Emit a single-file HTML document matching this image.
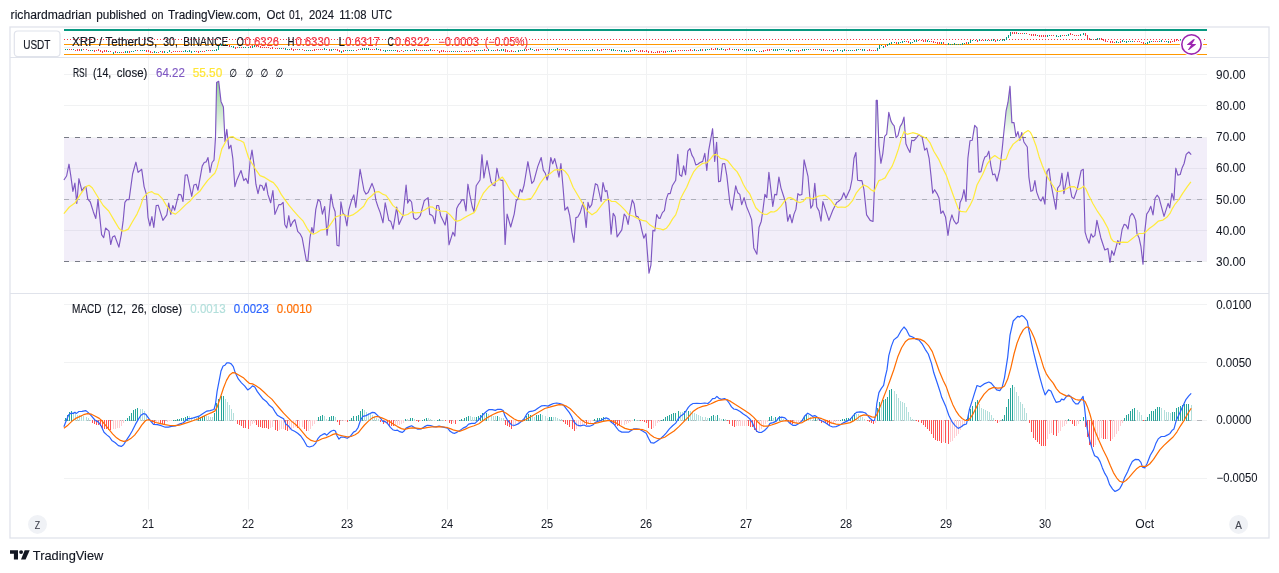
<!DOCTYPE html>
<html lang="en"><head><meta charset="utf-8"><title>XRP / TetherUS RSI and MACD chart</title>
<style>html,body{margin:0;padding:0;background:#fff}body{width:1279px;height:573px;overflow:hidden;font-family:'Liberation Sans', Arial, sans-serif}svg{display:block;will-change:transform}</style>
</head><body>
<svg width="1279" height="573" viewBox="0 0 1279 573" font-family="'Liberation Sans', Arial, sans-serif" font-size="12">
<rect width="1279" height="573" fill="#fff"/>
<text y="18.8" fill="#131722" stroke="#131722" stroke-width="0.15"><tspan x="10.6" textLength="80.9" lengthAdjust="spacingAndGlyphs">richardmadrian</tspan> <tspan x="96.2" textLength="50.0" lengthAdjust="spacingAndGlyphs">published</tspan> <tspan x="151.4" textLength="12.0" lengthAdjust="spacingAndGlyphs">on</tspan> <tspan x="168.1" textLength="92.9" lengthAdjust="spacingAndGlyphs">TradingView.com,</tspan> <tspan x="266.5" textLength="17.9" lengthAdjust="spacingAndGlyphs">Oct</tspan> <tspan x="289.1" textLength="14.1" lengthAdjust="spacingAndGlyphs">01,</tspan> <tspan x="309" textLength="25.0" lengthAdjust="spacingAndGlyphs">2024</tspan> <tspan x="339.2" textLength="27.3" lengthAdjust="spacingAndGlyphs">11:08</tspan> <tspan x="371.2" textLength="20.8" lengthAdjust="spacingAndGlyphs">UTC</tspan></text>
<g stroke="#f1f2f3" stroke-width="1" fill="none">
<path d="M148.5 28V509.5M248.5 28V509.5M347.5 28V509.5M447.5 28V509.5M547.5 28V509.5M646.5 28V509.5M746.5 28V509.5M846.5 28V509.5M946.5 28V509.5M1045.5 28V509.5M1145.5 28V509.5"/>
<path d="M64 74.5H1207M64 105.5H1207M64 137.5H1207M64 168.5H1207M64 199.5H1207M64 230.5H1207M64 261.5H1207"/>
<path d="M64 304.5H1207M64 362.5H1207M64 420.5H1207M64 478.5H1207"/>
<path d="M64 47.5H1207"/>
</g>
<rect x="64" y="138" width="1143" height="123" fill="#7e57c2" fill-opacity="0.1"/>
<g stroke="#787b86" stroke-width="1" fill="none" stroke-dasharray="5 6">
<path d="M64 137.5H1207M64 261.5H1207"/>
<path d="M64 199.5H1207M64 420.5H1207" stroke-opacity="0.5"/>
</g>
<defs>
<linearGradient id="gOB" gradientUnits="userSpaceOnUse" x1="0" y1="43.7" x2="0" y2="137.5"><stop offset="0" stop-color="#4caf50" stop-opacity="1"/><stop offset="1" stop-color="#4caf50" stop-opacity="0"/></linearGradient>
<linearGradient id="gOS" gradientUnits="userSpaceOnUse" x1="0" y1="261.5" x2="0" y2="354.7"><stop offset="0" stop-color="#f23645" stop-opacity="0"/><stop offset="1" stop-color="#f23645" stop-opacity="1"/></linearGradient>
<clipPath id="cOB"><rect x="64" y="58" width="1143" height="79.5"/></clipPath>
<clipPath id="cOS"><rect x="64" y="261.5" width="1143" height="31.5"/></clipPath>
</defs>
<polygon clip-path="url(#cOB)" fill="url(#gOB)" points="63.9,137.5 63.9,180.0 66.6,176.0 69.0,164.2 70.7,175.2 72.9,191.3 74.9,183.1 76.8,203.4 78.9,178.7 82.0,191.0 83.9,187.8 85.9,186.6 87.8,199.1 90.3,202.0 93.3,211.7 95.8,218.5 98.0,199.6 101.6,234.6 103.7,237.7 105.6,228.0 109.0,231.1 110.7,244.5 112.6,236.9 114.7,235.8 118.9,247.1 121.3,234.6 123.2,220.4 124.9,202.3 126.8,199.6 129.1,199.6 132.6,174.0 135.9,162.2 138.1,172.4 141.7,169.3 144.1,186.6 146.4,194.4 148.0,217.3 149.9,225.9 151.9,216.5 153.8,227.5 156.2,205.5 158.2,205.2 162.9,220.4 166.8,214.9 168.7,203.1 170.8,214.5 172.8,205.5 174.7,210.2 178.6,194.4 181.0,194.7 183.0,201.5 185.2,175.1 187.3,174.8 191.7,196.3 193.9,185.0 196.1,184.2 197.9,190.2 202.2,166.1 204.2,162.5 206.1,161.9 208.0,157.5 210.0,172.4 212.1,162.5 214.0,160.2 215.5,137.6 216.6,82.6 218.7,81.3 221.0,101.4 223.4,106.9 225.0,141.5 226.8,129.4 228.9,148.6 230.9,145.2 232.8,158.3 234.9,186.6 236.7,180.6 241.0,170.5 243.8,180.6 245.9,178.4 248.1,183.4 250.1,161.4 252.0,150.1 254.0,164.6 255.9,184.2 258.0,193.6 260.0,185.0 262.0,185.8 263.9,190.5 266.0,182.9 267.9,194.4 270.7,202.7 272.9,190.5 274.9,214.4 278.9,204.6 280.9,204.6 283.1,202.3 284.8,224.4 286.7,228.0 288.8,215.7 290.6,226.4 292.7,222.0 294.9,219.6 297.7,231.4 300.1,233.8 302.1,237.7 306.3,260.5 307.9,260.5 310.0,237.7 311.8,227.5 313.4,233.0 315.8,209.4 318.1,199.6 320.2,201.5 322.4,214.1 324.7,206.5 327.1,235.3 331.0,194.4 333.1,206.2 335.1,211.7 337.0,245.2 339.0,246.0 340.9,201.8 343.0,213.4 344.8,214.9 346.9,225.9 348.8,210.2 351.6,200.2 353.8,194.9 355.8,207.5 360.1,169.3 364.0,190.5 366.0,194.1 368.1,192.5 372.0,183.4 374.2,189.4 375.9,200.4 377.8,206.3 380.2,212.6 383.0,222.8 385.2,202.8 388.8,220.4 390.7,221.2 393.1,229.1 396.7,207.1 399.0,224.4 403.0,215.7 406.1,185.0 407.7,203.1 409.6,199.6 411.6,202.0 413.7,218.1 415.9,219.6 417.9,218.5 420.3,215.7 424.2,200.8 426.1,199.1 428.1,197.6 429.7,214.4 431.2,214.9 432.8,216.2 434.9,223.6 436.7,205.5 438.6,205.5 440.7,215.7 443.0,220.4 445.1,225.1 447.0,213.8 449.0,244.8 452.9,232.2 454.8,236.1 456.7,208.6 458.7,204.6 460.0,203.1 461.9,199.9 463.9,199.9 466.0,210.9 467.9,184.2 469.7,194.4 472.3,207.0 474.1,211.7 476.2,185.8 480.0,180.0 482.0,154.7 483.9,177.9 487.0,160.6 489.1,171.6 491.0,181.8 493.0,185.0 494.9,185.8 496.9,168.2 499.3,179.5 501.2,180.3 502.9,180.3 505.1,244.5 507.1,214.1 510.7,227.0 514.2,214.1 516.2,200.8 518.1,198.3 520.2,189.4 522.1,192.1 524.1,185.0 527.9,161.7 531.8,183.4 533.8,181.1 537.8,166.4 541.2,157.5 543.3,170.1 545.3,173.2 547.2,180.0 549.1,171.6 550.8,157.5 552.7,163.8 554.7,158.6 557.1,168.2 559.0,177.1 560.9,163.5 562.9,185.8 564.9,210.1 567.6,207.0 569.7,215.7 571.9,232.2 573.9,242.4 575.9,217.6 577.8,217.0 580.2,212.6 583.3,202.4 586.2,227.5 588.0,202.4 589.6,207.8 591.7,204.6 595.4,183.7 597.5,185.0 601.1,201.5 603.0,182.6 605.3,191.6 606.9,190.5 608.9,203.1 611.1,234.2 613.2,213.4 615.1,216.5 617.1,236.9 621.8,229.9 624.2,214.1 626.1,216.5 628.1,224.4 630.1,211.0 632.3,199.9 634.1,203.8 636.0,216.1 638.0,216.7 639.9,221.2 641.9,230.6 643.8,238.2 645.9,233.8 649.0,273.1 650.9,265.2 652.9,230.3 654.8,231.0 656.7,214.5 658.7,218.1 660.0,218.5 662.4,212.6 664.4,210.7 666.3,199.1 668.2,193.6 670.2,193.6 672.3,185.8 675.7,180.3 677.8,154.4 679.6,174.8 681.7,176.3 683.6,165.8 685.6,174.8 687.8,151.2 689.9,148.5 691.9,155.1 693.8,158.3 695.8,164.9 697.7,164.2 699.7,162.7 702.7,161.4 704.8,153.3 706.8,170.5 708.7,150.4 712.6,128.7 714.7,161.4 716.6,142.3 718.6,181.8 720.5,181.1 722.5,163.8 724.7,163.5 726.8,175.6 729.9,203.1 732.0,210.1 735.7,185.8 737.8,192.8 739.8,194.4 741.7,204.6 744.1,197.6 746.4,206.2 749.6,214.1 751.6,219.6 753.8,247.9 756.9,254.2 759.0,227.5 761.3,221.2 762.9,210.2 764.9,194.4 766.8,197.6 768.9,172.4 772.8,206.5 774.7,194.4 776.7,194.9 778.9,177.1 781.0,188.1 783.3,195.2 785.7,202.7 787.7,221.2 789.9,214.5 792.0,222.8 794.0,214.1 795.9,209.4 797.9,193.6 799.8,195.2 801.9,194.4 804.1,159.9 808.0,176.3 810.8,208.2 812.7,205.1 814.8,183.4 816.8,207.0 819.0,210.9 821.0,221.2 822.9,201.6 828.9,220.4 832.8,210.2 836.7,202.4 838.3,201.5 841.5,198.8 843.8,192.8 845.9,198.3 850.1,188.9 852.0,179.5 854.0,158.3 855.9,152.5 857.6,180.3 860.0,180.6 861.9,180.6 863.9,189.4 866.6,214.9 870.2,220.4 873.0,221.5 874.9,177.1 876.2,100.2 877.3,100.2 878.9,145.7 880.9,163.3 882.8,153.6 884.7,136.3 886.7,134.1 888.8,112.4 891.0,121.1 892.7,124.2 894.2,125.8 896.1,137.6 898.0,135.7 900.1,126.6 902.1,123.4 904.0,117.1 905.9,143.8 907.9,148.6 910.0,152.5 911.8,140.2 913.9,140.7 915.8,138.6 918.9,134.7 922.1,137.1 924.7,150.1 926.8,148.1 929.1,158.3 931.0,175.6 932.7,193.2 934.6,189.7 937.0,193.6 939.0,197.9 940.9,213.4 943.0,211.0 945.6,217.3 948.0,235.3 949.9,222.0 951.9,214.9 953.8,220.4 956.2,224.0 958.2,222.0 960.1,202.4 962.1,198.3 964.0,189.7 966.0,201.5 967.9,158.3 970.0,140.7 972.3,140.2 974.7,125.3 977.0,127.8 978.9,172.1 981.0,171.6 983.3,161.4 984.9,157.0 986.9,155.9 988.8,151.2 990.9,166.1 992.8,174.8 994.8,174.0 997.0,181.1 999.8,169.3 1002.2,148.9 1004.1,129.7 1006.1,110.8 1008.0,102.2 1010.0,86.2 1011.9,122.6 1014.0,122.6 1016.0,136.8 1017.9,131.6 1019.9,140.4 1021.8,132.5 1023.9,142.0 1027.3,147.0 1028.9,177.1 1030.9,191.3 1032.8,190.5 1034.9,180.6 1036.7,192.1 1039.1,198.8 1041.0,201.0 1043.0,196.8 1044.9,204.2 1047.0,171.6 1049.0,168.5 1050.9,183.4 1055.9,209.3 1057.6,188.1 1060.0,185.0 1062.0,173.2 1063.9,193.6 1067.9,172.1 1069.7,185.0 1071.8,196.8 1073.8,198.7 1077.3,188.9 1081.2,170.4 1083.3,169.3 1085.1,232.2 1086.7,237.7 1089.1,243.2 1091.1,233.8 1093.0,237.2 1094.9,235.3 1096.9,220.4 1100.8,237.7 1104.8,250.0 1107.9,248.4 1110.0,262.5 1111.8,250.7 1113.9,255.3 1117.8,240.5 1119.7,244.5 1122.1,229.5 1124.1,224.4 1126.0,225.1 1128.0,229.1 1129.9,216.5 1132.0,213.4 1133.8,215.7 1135.7,220.4 1137.0,233.8 1139.0,237.7 1140.9,246.3 1143.0,264.1 1144.8,231.4 1146.7,214.1 1148.8,211.0 1150.8,206.3 1153.0,214.9 1155.1,198.3 1157.1,195.2 1159.0,197.6 1164.0,216.4 1168.1,203.4 1169.7,207.8 1171.9,193.3 1173.9,200.2 1175.8,168.2 1177.8,175.1 1180.2,174.5 1182.2,167.7 1184.1,163.5 1186.2,154.4 1188.8,152.0 1191.2,154.7 1191.2,137.5"/>
<polygon clip-path="url(#cOS)" fill="url(#gOS)" points="63.9,261.5 63.9,180.0 66.6,176.0 69.0,164.2 70.7,175.2 72.9,191.3 74.9,183.1 76.8,203.4 78.9,178.7 82.0,191.0 83.9,187.8 85.9,186.6 87.8,199.1 90.3,202.0 93.3,211.7 95.8,218.5 98.0,199.6 101.6,234.6 103.7,237.7 105.6,228.0 109.0,231.1 110.7,244.5 112.6,236.9 114.7,235.8 118.9,247.1 121.3,234.6 123.2,220.4 124.9,202.3 126.8,199.6 129.1,199.6 132.6,174.0 135.9,162.2 138.1,172.4 141.7,169.3 144.1,186.6 146.4,194.4 148.0,217.3 149.9,225.9 151.9,216.5 153.8,227.5 156.2,205.5 158.2,205.2 162.9,220.4 166.8,214.9 168.7,203.1 170.8,214.5 172.8,205.5 174.7,210.2 178.6,194.4 181.0,194.7 183.0,201.5 185.2,175.1 187.3,174.8 191.7,196.3 193.9,185.0 196.1,184.2 197.9,190.2 202.2,166.1 204.2,162.5 206.1,161.9 208.0,157.5 210.0,172.4 212.1,162.5 214.0,160.2 215.5,137.6 216.6,82.6 218.7,81.3 221.0,101.4 223.4,106.9 225.0,141.5 226.8,129.4 228.9,148.6 230.9,145.2 232.8,158.3 234.9,186.6 236.7,180.6 241.0,170.5 243.8,180.6 245.9,178.4 248.1,183.4 250.1,161.4 252.0,150.1 254.0,164.6 255.9,184.2 258.0,193.6 260.0,185.0 262.0,185.8 263.9,190.5 266.0,182.9 267.9,194.4 270.7,202.7 272.9,190.5 274.9,214.4 278.9,204.6 280.9,204.6 283.1,202.3 284.8,224.4 286.7,228.0 288.8,215.7 290.6,226.4 292.7,222.0 294.9,219.6 297.7,231.4 300.1,233.8 302.1,237.7 306.3,260.5 307.9,260.5 310.0,237.7 311.8,227.5 313.4,233.0 315.8,209.4 318.1,199.6 320.2,201.5 322.4,214.1 324.7,206.5 327.1,235.3 331.0,194.4 333.1,206.2 335.1,211.7 337.0,245.2 339.0,246.0 340.9,201.8 343.0,213.4 344.8,214.9 346.9,225.9 348.8,210.2 351.6,200.2 353.8,194.9 355.8,207.5 360.1,169.3 364.0,190.5 366.0,194.1 368.1,192.5 372.0,183.4 374.2,189.4 375.9,200.4 377.8,206.3 380.2,212.6 383.0,222.8 385.2,202.8 388.8,220.4 390.7,221.2 393.1,229.1 396.7,207.1 399.0,224.4 403.0,215.7 406.1,185.0 407.7,203.1 409.6,199.6 411.6,202.0 413.7,218.1 415.9,219.6 417.9,218.5 420.3,215.7 424.2,200.8 426.1,199.1 428.1,197.6 429.7,214.4 431.2,214.9 432.8,216.2 434.9,223.6 436.7,205.5 438.6,205.5 440.7,215.7 443.0,220.4 445.1,225.1 447.0,213.8 449.0,244.8 452.9,232.2 454.8,236.1 456.7,208.6 458.7,204.6 460.0,203.1 461.9,199.9 463.9,199.9 466.0,210.9 467.9,184.2 469.7,194.4 472.3,207.0 474.1,211.7 476.2,185.8 480.0,180.0 482.0,154.7 483.9,177.9 487.0,160.6 489.1,171.6 491.0,181.8 493.0,185.0 494.9,185.8 496.9,168.2 499.3,179.5 501.2,180.3 502.9,180.3 505.1,244.5 507.1,214.1 510.7,227.0 514.2,214.1 516.2,200.8 518.1,198.3 520.2,189.4 522.1,192.1 524.1,185.0 527.9,161.7 531.8,183.4 533.8,181.1 537.8,166.4 541.2,157.5 543.3,170.1 545.3,173.2 547.2,180.0 549.1,171.6 550.8,157.5 552.7,163.8 554.7,158.6 557.1,168.2 559.0,177.1 560.9,163.5 562.9,185.8 564.9,210.1 567.6,207.0 569.7,215.7 571.9,232.2 573.9,242.4 575.9,217.6 577.8,217.0 580.2,212.6 583.3,202.4 586.2,227.5 588.0,202.4 589.6,207.8 591.7,204.6 595.4,183.7 597.5,185.0 601.1,201.5 603.0,182.6 605.3,191.6 606.9,190.5 608.9,203.1 611.1,234.2 613.2,213.4 615.1,216.5 617.1,236.9 621.8,229.9 624.2,214.1 626.1,216.5 628.1,224.4 630.1,211.0 632.3,199.9 634.1,203.8 636.0,216.1 638.0,216.7 639.9,221.2 641.9,230.6 643.8,238.2 645.9,233.8 649.0,273.1 650.9,265.2 652.9,230.3 654.8,231.0 656.7,214.5 658.7,218.1 660.0,218.5 662.4,212.6 664.4,210.7 666.3,199.1 668.2,193.6 670.2,193.6 672.3,185.8 675.7,180.3 677.8,154.4 679.6,174.8 681.7,176.3 683.6,165.8 685.6,174.8 687.8,151.2 689.9,148.5 691.9,155.1 693.8,158.3 695.8,164.9 697.7,164.2 699.7,162.7 702.7,161.4 704.8,153.3 706.8,170.5 708.7,150.4 712.6,128.7 714.7,161.4 716.6,142.3 718.6,181.8 720.5,181.1 722.5,163.8 724.7,163.5 726.8,175.6 729.9,203.1 732.0,210.1 735.7,185.8 737.8,192.8 739.8,194.4 741.7,204.6 744.1,197.6 746.4,206.2 749.6,214.1 751.6,219.6 753.8,247.9 756.9,254.2 759.0,227.5 761.3,221.2 762.9,210.2 764.9,194.4 766.8,197.6 768.9,172.4 772.8,206.5 774.7,194.4 776.7,194.9 778.9,177.1 781.0,188.1 783.3,195.2 785.7,202.7 787.7,221.2 789.9,214.5 792.0,222.8 794.0,214.1 795.9,209.4 797.9,193.6 799.8,195.2 801.9,194.4 804.1,159.9 808.0,176.3 810.8,208.2 812.7,205.1 814.8,183.4 816.8,207.0 819.0,210.9 821.0,221.2 822.9,201.6 828.9,220.4 832.8,210.2 836.7,202.4 838.3,201.5 841.5,198.8 843.8,192.8 845.9,198.3 850.1,188.9 852.0,179.5 854.0,158.3 855.9,152.5 857.6,180.3 860.0,180.6 861.9,180.6 863.9,189.4 866.6,214.9 870.2,220.4 873.0,221.5 874.9,177.1 876.2,100.2 877.3,100.2 878.9,145.7 880.9,163.3 882.8,153.6 884.7,136.3 886.7,134.1 888.8,112.4 891.0,121.1 892.7,124.2 894.2,125.8 896.1,137.6 898.0,135.7 900.1,126.6 902.1,123.4 904.0,117.1 905.9,143.8 907.9,148.6 910.0,152.5 911.8,140.2 913.9,140.7 915.8,138.6 918.9,134.7 922.1,137.1 924.7,150.1 926.8,148.1 929.1,158.3 931.0,175.6 932.7,193.2 934.6,189.7 937.0,193.6 939.0,197.9 940.9,213.4 943.0,211.0 945.6,217.3 948.0,235.3 949.9,222.0 951.9,214.9 953.8,220.4 956.2,224.0 958.2,222.0 960.1,202.4 962.1,198.3 964.0,189.7 966.0,201.5 967.9,158.3 970.0,140.7 972.3,140.2 974.7,125.3 977.0,127.8 978.9,172.1 981.0,171.6 983.3,161.4 984.9,157.0 986.9,155.9 988.8,151.2 990.9,166.1 992.8,174.8 994.8,174.0 997.0,181.1 999.8,169.3 1002.2,148.9 1004.1,129.7 1006.1,110.8 1008.0,102.2 1010.0,86.2 1011.9,122.6 1014.0,122.6 1016.0,136.8 1017.9,131.6 1019.9,140.4 1021.8,132.5 1023.9,142.0 1027.3,147.0 1028.9,177.1 1030.9,191.3 1032.8,190.5 1034.9,180.6 1036.7,192.1 1039.1,198.8 1041.0,201.0 1043.0,196.8 1044.9,204.2 1047.0,171.6 1049.0,168.5 1050.9,183.4 1055.9,209.3 1057.6,188.1 1060.0,185.0 1062.0,173.2 1063.9,193.6 1067.9,172.1 1069.7,185.0 1071.8,196.8 1073.8,198.7 1077.3,188.9 1081.2,170.4 1083.3,169.3 1085.1,232.2 1086.7,237.7 1089.1,243.2 1091.1,233.8 1093.0,237.2 1094.9,235.3 1096.9,220.4 1100.8,237.7 1104.8,250.0 1107.9,248.4 1110.0,262.5 1111.8,250.7 1113.9,255.3 1117.8,240.5 1119.7,244.5 1122.1,229.5 1124.1,224.4 1126.0,225.1 1128.0,229.1 1129.9,216.5 1132.0,213.4 1133.8,215.7 1135.7,220.4 1137.0,233.8 1139.0,237.7 1140.9,246.3 1143.0,264.1 1144.8,231.4 1146.7,214.1 1148.8,211.0 1150.8,206.3 1153.0,214.9 1155.1,198.3 1157.1,195.2 1159.0,197.6 1164.0,216.4 1168.1,203.4 1169.7,207.8 1171.9,193.3 1173.9,200.2 1175.8,168.2 1177.8,175.1 1180.2,174.5 1182.2,167.7 1184.1,163.5 1186.2,154.4 1188.8,152.0 1191.2,154.7 1191.2,261.5"/>
<polyline fill="none" stroke="#7e57c2" stroke-width="1.15" stroke-linejoin="round" points="63.9,180.0 66.6,176.0 69.0,164.2 70.7,175.2 72.9,191.3 74.9,183.1 76.8,203.4 78.9,178.7 82.0,191.0 83.9,187.8 85.9,186.6 87.8,199.1 90.3,202.0 93.3,211.7 95.8,218.5 98.0,199.6 101.6,234.6 103.7,237.7 105.6,228.0 109.0,231.1 110.7,244.5 112.6,236.9 114.7,235.8 118.9,247.1 121.3,234.6 123.2,220.4 124.9,202.3 126.8,199.6 129.1,199.6 132.6,174.0 135.9,162.2 138.1,172.4 141.7,169.3 144.1,186.6 146.4,194.4 148.0,217.3 149.9,225.9 151.9,216.5 153.8,227.5 156.2,205.5 158.2,205.2 162.9,220.4 166.8,214.9 168.7,203.1 170.8,214.5 172.8,205.5 174.7,210.2 178.6,194.4 181.0,194.7 183.0,201.5 185.2,175.1 187.3,174.8 191.7,196.3 193.9,185.0 196.1,184.2 197.9,190.2 202.2,166.1 204.2,162.5 206.1,161.9 208.0,157.5 210.0,172.4 212.1,162.5 214.0,160.2 215.5,137.6 216.6,82.6 218.7,81.3 221.0,101.4 223.4,106.9 225.0,141.5 226.8,129.4 228.9,148.6 230.9,145.2 232.8,158.3 234.9,186.6 236.7,180.6 241.0,170.5 243.8,180.6 245.9,178.4 248.1,183.4 250.1,161.4 252.0,150.1 254.0,164.6 255.9,184.2 258.0,193.6 260.0,185.0 262.0,185.8 263.9,190.5 266.0,182.9 267.9,194.4 270.7,202.7 272.9,190.5 274.9,214.4 278.9,204.6 280.9,204.6 283.1,202.3 284.8,224.4 286.7,228.0 288.8,215.7 290.6,226.4 292.7,222.0 294.9,219.6 297.7,231.4 300.1,233.8 302.1,237.7 306.3,260.5 307.9,260.5 310.0,237.7 311.8,227.5 313.4,233.0 315.8,209.4 318.1,199.6 320.2,201.5 322.4,214.1 324.7,206.5 327.1,235.3 331.0,194.4 333.1,206.2 335.1,211.7 337.0,245.2 339.0,246.0 340.9,201.8 343.0,213.4 344.8,214.9 346.9,225.9 348.8,210.2 351.6,200.2 353.8,194.9 355.8,207.5 360.1,169.3 364.0,190.5 366.0,194.1 368.1,192.5 372.0,183.4 374.2,189.4 375.9,200.4 377.8,206.3 380.2,212.6 383.0,222.8 385.2,202.8 388.8,220.4 390.7,221.2 393.1,229.1 396.7,207.1 399.0,224.4 403.0,215.7 406.1,185.0 407.7,203.1 409.6,199.6 411.6,202.0 413.7,218.1 415.9,219.6 417.9,218.5 420.3,215.7 424.2,200.8 426.1,199.1 428.1,197.6 429.7,214.4 431.2,214.9 432.8,216.2 434.9,223.6 436.7,205.5 438.6,205.5 440.7,215.7 443.0,220.4 445.1,225.1 447.0,213.8 449.0,244.8 452.9,232.2 454.8,236.1 456.7,208.6 458.7,204.6 460.0,203.1 461.9,199.9 463.9,199.9 466.0,210.9 467.9,184.2 469.7,194.4 472.3,207.0 474.1,211.7 476.2,185.8 480.0,180.0 482.0,154.7 483.9,177.9 487.0,160.6 489.1,171.6 491.0,181.8 493.0,185.0 494.9,185.8 496.9,168.2 499.3,179.5 501.2,180.3 502.9,180.3 505.1,244.5 507.1,214.1 510.7,227.0 514.2,214.1 516.2,200.8 518.1,198.3 520.2,189.4 522.1,192.1 524.1,185.0 527.9,161.7 531.8,183.4 533.8,181.1 537.8,166.4 541.2,157.5 543.3,170.1 545.3,173.2 547.2,180.0 549.1,171.6 550.8,157.5 552.7,163.8 554.7,158.6 557.1,168.2 559.0,177.1 560.9,163.5 562.9,185.8 564.9,210.1 567.6,207.0 569.7,215.7 571.9,232.2 573.9,242.4 575.9,217.6 577.8,217.0 580.2,212.6 583.3,202.4 586.2,227.5 588.0,202.4 589.6,207.8 591.7,204.6 595.4,183.7 597.5,185.0 601.1,201.5 603.0,182.6 605.3,191.6 606.9,190.5 608.9,203.1 611.1,234.2 613.2,213.4 615.1,216.5 617.1,236.9 621.8,229.9 624.2,214.1 626.1,216.5 628.1,224.4 630.1,211.0 632.3,199.9 634.1,203.8 636.0,216.1 638.0,216.7 639.9,221.2 641.9,230.6 643.8,238.2 645.9,233.8 649.0,273.1 650.9,265.2 652.9,230.3 654.8,231.0 656.7,214.5 658.7,218.1 660.0,218.5 662.4,212.6 664.4,210.7 666.3,199.1 668.2,193.6 670.2,193.6 672.3,185.8 675.7,180.3 677.8,154.4 679.6,174.8 681.7,176.3 683.6,165.8 685.6,174.8 687.8,151.2 689.9,148.5 691.9,155.1 693.8,158.3 695.8,164.9 697.7,164.2 699.7,162.7 702.7,161.4 704.8,153.3 706.8,170.5 708.7,150.4 712.6,128.7 714.7,161.4 716.6,142.3 718.6,181.8 720.5,181.1 722.5,163.8 724.7,163.5 726.8,175.6 729.9,203.1 732.0,210.1 735.7,185.8 737.8,192.8 739.8,194.4 741.7,204.6 744.1,197.6 746.4,206.2 749.6,214.1 751.6,219.6 753.8,247.9 756.9,254.2 759.0,227.5 761.3,221.2 762.9,210.2 764.9,194.4 766.8,197.6 768.9,172.4 772.8,206.5 774.7,194.4 776.7,194.9 778.9,177.1 781.0,188.1 783.3,195.2 785.7,202.7 787.7,221.2 789.9,214.5 792.0,222.8 794.0,214.1 795.9,209.4 797.9,193.6 799.8,195.2 801.9,194.4 804.1,159.9 808.0,176.3 810.8,208.2 812.7,205.1 814.8,183.4 816.8,207.0 819.0,210.9 821.0,221.2 822.9,201.6 828.9,220.4 832.8,210.2 836.7,202.4 838.3,201.5 841.5,198.8 843.8,192.8 845.9,198.3 850.1,188.9 852.0,179.5 854.0,158.3 855.9,152.5 857.6,180.3 860.0,180.6 861.9,180.6 863.9,189.4 866.6,214.9 870.2,220.4 873.0,221.5 874.9,177.1 876.2,100.2 877.3,100.2 878.9,145.7 880.9,163.3 882.8,153.6 884.7,136.3 886.7,134.1 888.8,112.4 891.0,121.1 892.7,124.2 894.2,125.8 896.1,137.6 898.0,135.7 900.1,126.6 902.1,123.4 904.0,117.1 905.9,143.8 907.9,148.6 910.0,152.5 911.8,140.2 913.9,140.7 915.8,138.6 918.9,134.7 922.1,137.1 924.7,150.1 926.8,148.1 929.1,158.3 931.0,175.6 932.7,193.2 934.6,189.7 937.0,193.6 939.0,197.9 940.9,213.4 943.0,211.0 945.6,217.3 948.0,235.3 949.9,222.0 951.9,214.9 953.8,220.4 956.2,224.0 958.2,222.0 960.1,202.4 962.1,198.3 964.0,189.7 966.0,201.5 967.9,158.3 970.0,140.7 972.3,140.2 974.7,125.3 977.0,127.8 978.9,172.1 981.0,171.6 983.3,161.4 984.9,157.0 986.9,155.9 988.8,151.2 990.9,166.1 992.8,174.8 994.8,174.0 997.0,181.1 999.8,169.3 1002.2,148.9 1004.1,129.7 1006.1,110.8 1008.0,102.2 1010.0,86.2 1011.9,122.6 1014.0,122.6 1016.0,136.8 1017.9,131.6 1019.9,140.4 1021.8,132.5 1023.9,142.0 1027.3,147.0 1028.9,177.1 1030.9,191.3 1032.8,190.5 1034.9,180.6 1036.7,192.1 1039.1,198.8 1041.0,201.0 1043.0,196.8 1044.9,204.2 1047.0,171.6 1049.0,168.5 1050.9,183.4 1055.9,209.3 1057.6,188.1 1060.0,185.0 1062.0,173.2 1063.9,193.6 1067.9,172.1 1069.7,185.0 1071.8,196.8 1073.8,198.7 1077.3,188.9 1081.2,170.4 1083.3,169.3 1085.1,232.2 1086.7,237.7 1089.1,243.2 1091.1,233.8 1093.0,237.2 1094.9,235.3 1096.9,220.4 1100.8,237.7 1104.8,250.0 1107.9,248.4 1110.0,262.5 1111.8,250.7 1113.9,255.3 1117.8,240.5 1119.7,244.5 1122.1,229.5 1124.1,224.4 1126.0,225.1 1128.0,229.1 1129.9,216.5 1132.0,213.4 1133.8,215.7 1135.7,220.4 1137.0,233.8 1139.0,237.7 1140.9,246.3 1143.0,264.1 1144.8,231.4 1146.7,214.1 1148.8,211.0 1150.8,206.3 1153.0,214.9 1155.1,198.3 1157.1,195.2 1159.0,197.6 1164.0,216.4 1168.1,203.4 1169.7,207.8 1171.9,193.3 1173.9,200.2 1175.8,168.2 1177.8,175.1 1180.2,174.5 1182.2,167.7 1184.1,163.5 1186.2,154.4 1188.8,152.0 1191.2,154.7"/>
<polyline fill="none" stroke="#ffeb3b" stroke-width="1.2" stroke-linejoin="round" points="63.9,213.6 69.4,207.0 74.9,203.1 80.4,194.4 85.9,186.6 89.1,185.3 92.2,187.8 97.7,196.8 103.2,205.5 108.7,211.0 114.2,220.4 118.9,228.3 122.1,231.1 125.2,230.6 128.3,229.1 132.3,222.0 137.0,214.1 140.1,207.1 143.3,197.6 148.0,192.8 151.9,191.6 154.3,193.6 158.2,194.4 162.1,198.3 166.8,206.2 171.5,212.5 175.5,214.1 179.4,210.9 185.7,204.6 190.4,200.7 195.1,195.2 199.8,191.3 203.0,186.6 207.7,180.3 211.6,176.3 214.8,173.2 217.1,167.7 221.8,148.9 226.5,140.2 229.7,137.1 232.8,136.6 236.7,139.4 240.7,140.7 243.8,142.6 246.2,150.4 248.5,157.5 251.7,163.0 255.6,169.3 260.0,175.6 264.7,177.4 269.4,180.6 273.4,182.6 277.3,187.3 281.2,194.4 285.1,199.9 289.1,205.4 293.0,210.1 298.5,216.4 303.2,221.2 307.1,228.3 310.3,232.7 313.4,234.2 316.6,232.7 320.5,230.2 324.4,229.4 327.6,228.3 331.5,222.8 335.4,217.0 339.3,215.7 343.3,214.5 348.0,216.5 352.7,214.9 357.4,211.8 363.7,206.3 367.6,199.1 371.5,196.0 375.5,192.1 378.6,191.6 382.5,194.1 385.7,195.2 388.8,199.1 392.8,205.4 396.7,208.6 400.6,213.3 403.0,215.7 407.7,214.5 411.6,211.8 415.5,212.9 420.3,212.3 425.0,209.7 429.7,206.8 432.8,207.1 436.0,209.7 440.7,211.0 446.2,211.5 450.1,214.9 454.8,220.4 457.2,221.2 460.0,220.4 463.9,218.1 467.9,215.7 474.1,212.6 475.7,210.1 479.6,200.7 483.6,192.8 488.3,187.3 493.0,183.4 497.7,180.6 502.4,177.1 505.6,181.8 510.3,190.5 515.0,196.0 519.7,199.1 524.4,199.9 529.1,198.8 531.5,198.3 535.4,192.1 540.1,183.4 544.8,177.1 549.6,174.0 554.3,170.1 557.4,169.6 559.8,170.1 562.1,169.3 565.3,171.6 568.4,175.6 573.1,187.3 577.8,195.2 582.5,203.1 587.3,210.9 592.0,214.8 596.7,211.7 601.4,205.4 605.3,200.7 608.5,199.1 611.6,201.5 615.5,201.5 620.3,205.4 625.0,210.1 628.9,214.8 632.8,216.0 637.5,218.4 642.2,220.4 646.2,221.2 650.1,225.1 654.8,228.0 660.0,228.8 663.1,229.9 666.3,228.3 669.4,224.4 672.6,218.9 675.7,214.9 678.1,207.9 680.4,199.1 683.6,192.8 686.7,187.3 689.9,179.5 693.8,171.6 697.7,166.9 702.4,163.5 707.1,162.7 710.3,159.1 713.4,155.1 716.6,154.4 720.5,158.3 724.4,159.1 727.6,160.6 730.7,164.6 733.8,168.5 737.0,171.6 740.1,177.1 743.3,184.2 746.4,189.7 749.6,193.6 752.7,200.7 755.8,207.8 759.8,211.7 763.7,214.1 766.8,214.5 770.8,211.7 773.9,212.0 777.0,210.4 781.0,206.2 784.9,200.7 788.0,197.9 790.4,197.6 793.5,199.1 796.7,201.5 799.8,202.6 803.0,201.5 806.1,197.9 809.3,197.9 812.4,198.8 815.5,197.6 818.7,196.0 821.8,195.7 825.0,195.2 828.1,197.6 831.2,200.7 834.4,205.1 837.5,207.3 841.5,207.0 845.4,207.3 848.5,205.4 852.5,200.7 856.4,192.8 860.0,188.4 863.9,185.0 867.9,186.9 871.0,189.7 874.1,191.6 876.5,185.8 878.9,180.6 882.0,179.5 885.1,177.9 889.1,170.8 892.2,166.1 895.3,158.3 898.5,148.9 901.6,137.9 904.0,131.6 907.1,134.4 912.6,132.7 917.3,133.9 922.1,136.3 926.8,138.6 929.9,142.6 933.8,151.2 938.6,159.1 942.5,167.7 946.4,175.6 949.6,185.0 953.5,196.0 958.2,208.6 960.5,211.4 966.0,212.0 970.0,205.4 973.1,199.1 977.0,185.0 982.5,174.8 987.3,163.8 991.2,158.3 994.8,155.6 998.3,158.0 1002.2,160.2 1006.1,159.1 1009.3,150.4 1013.2,144.1 1017.1,141.0 1020.3,138.6 1024.2,133.1 1028.1,130.5 1030.5,132.4 1032.8,137.1 1036.0,145.7 1039.1,156.7 1042.2,165.3 1045.4,173.2 1048.5,178.7 1052.5,185.0 1056.4,191.3 1060.0,191.3 1064.7,190.0 1069.4,186.9 1074.1,186.6 1078.1,189.4 1081.2,188.1 1083.6,186.2 1085.9,188.9 1089.1,196.0 1093.0,203.8 1097.7,211.7 1103.2,219.6 1107.9,228.3 1111.1,238.5 1113.4,241.3 1118.1,242.7 1122.8,242.1 1127.6,242.4 1131.5,239.3 1135.4,236.1 1139.3,233.5 1143.3,233.5 1146.4,231.4 1149.6,228.3 1153.5,225.5 1158.2,221.2 1162.9,220.1 1166.8,217.3 1170.0,213.4 1171.9,209.4 1174.7,204.7 1178.6,199.9 1182.5,193.6 1187.3,186.6 1190.9,181.8"/>
<path fill="#26a69a" d="M65 418h1V421h-1zM67 415h1V421h-1zM69 412h1V421h-1zM71 411h1V421h-1zM125 420h1V421h-1zM127 418h1V421h-1zM129 416h1V421h-1zM131 413h1V421h-1zM133 410h1V421h-1zM135 409h1V421h-1zM137 408h1V421h-1zM173 420h1V421h-1zM175 420h1V421h-1zM177 419h1V421h-1zM179 419h1V421h-1zM181 418h1V421h-1zM183 418h1V421h-1zM185 417h1V421h-1zM187 416h1V421h-1zM198 417h1V421h-1zM200 417h1V421h-1zM202 416h1V421h-1zM204 416h1V421h-1zM214 413h1V421h-1zM216 403h1V421h-1zM218 399h1V421h-1zM221 396h1V421h-1zM223 396h1V421h-1zM318 417h1V421h-1zM320 416h1V421h-1zM322 415h1V421h-1zM329 417h1V421h-1zM331 416h1V421h-1zM333 416h1V421h-1zM349 420h1V421h-1zM351 418h1V421h-1zM353 416h1V421h-1zM356 416h1V421h-1zM358 415h1V421h-1zM360 411h1V421h-1zM362 409h1V421h-1zM405 419h1V421h-1zM410 418h1V421h-1zM412 418h1V421h-1zM422 420h1V421h-1zM424 419h1V421h-1zM426 418h1V421h-1zM437 420h1V421h-1zM439 419h1V421h-1zM459 420h1V421h-1zM461 419h1V421h-1zM464 418h1V421h-1zM466 417h1V421h-1zM468 416h1V421h-1zM476 417h1V421h-1zM478 416h1V421h-1zM480 415h1V421h-1zM482 413h1V421h-1zM486 413h1V421h-1zM497 416h1V421h-1zM522 420h1V421h-1zM524 419h1V421h-1zM526 416h1V421h-1zM528 414h1V421h-1zM530 415h1V421h-1zM536 415h1V421h-1zM538 415h1V421h-1zM540 414h1V421h-1zM549 417h1V421h-1zM551 417h1V421h-1zM594 419h1V421h-1zM597 418h1V421h-1zM599 418h1V421h-1zM601 418h1V421h-1zM603 417h1V421h-1zM634 419h1V421h-1zM661 420h1V421h-1zM663 419h1V421h-1zM665 417h1V421h-1zM667 416h1V421h-1zM669 415h1V421h-1zM671 414h1V421h-1zM673 413h1V421h-1zM675 413h1V421h-1zM678 411h1V421h-1zM684 411h1V421h-1zM688 411h1V421h-1zM709 418h1V421h-1zM711 416h1V421h-1zM713 415h1V421h-1zM717 415h1V421h-1zM723 419h1V421h-1zM769 417h1V421h-1zM771 416h1V421h-1zM775 417h1V421h-1zM779 416h1V421h-1zM802 419h1V421h-1zM804 416h1V421h-1zM806 414h1V421h-1zM815 417h1V421h-1zM840 420h1V421h-1zM842 419h1V421h-1zM844 419h1V421h-1zM846 418h1V421h-1zM848 418h1V421h-1zM850 418h1V421h-1zM852 416h1V421h-1zM854 413h1V421h-1zM877 408h1V421h-1zM879 402h1V421h-1zM883 400h1V421h-1zM885 399h1V421h-1zM887 397h1V421h-1zM889 390h1V421h-1zM891 389h1V421h-1zM966 419h1V421h-1zM968 414h1V421h-1zM970 409h1V421h-1zM972 406h1V421h-1zM975 402h1V421h-1zM977 400h1V421h-1zM1002 419h1V421h-1zM1004 415h1V421h-1zM1006 407h1V421h-1zM1008 399h1V421h-1zM1010 388h1V421h-1zM1012 385h1V421h-1zM1068 419h1V421h-1zM1080 420h1V421h-1zM1083 417h1V421h-1zM1124 418h1V421h-1zM1126 415h1V421h-1zM1128 414h1V421h-1zM1130 411h1V421h-1zM1132 409h1V421h-1zM1134 408h1V421h-1zM1145 420h1V421h-1zM1147 417h1V421h-1zM1149 414h1V421h-1zM1151 411h1V421h-1zM1153 411h1V421h-1zM1155 409h1V421h-1zM1157 407h1V421h-1zM1159 407h1V421h-1zM1172 412h1V421h-1zM1174 412h1V421h-1zM1176 408h1V421h-1zM1178 407h1V421h-1zM1180 406h1V421h-1zM1182 405h1V421h-1zM1184 404h1V421h-1zM1186 404h1V421h-1zM1188 404h1V421h-1z"/>
<path fill="#b2dfdb" d="M73 412h1V421h-1zM75 413h1V421h-1zM77 415h1V421h-1zM79 415h1V421h-1zM81 416h1V421h-1zM83 416h1V421h-1zM86 417h1V421h-1zM88 418h1V421h-1zM90 420h1V421h-1zM140 409h1V421h-1zM142 409h1V421h-1zM144 411h1V421h-1zM146 414h1V421h-1zM148 417h1V421h-1zM150 420h1V421h-1zM189 416h1V421h-1zM191 417h1V421h-1zM194 417h1V421h-1zM196 418h1V421h-1zM206 416h1V421h-1zM208 416h1V421h-1zM210 417h1V421h-1zM212 417h1V421h-1zM225 399h1V421h-1zM227 402h1V421h-1zM229 405h1V421h-1zM231 409h1V421h-1zM233 413h1V421h-1zM235 420h1V421h-1zM324 416h1V421h-1zM326 419h1V421h-1zM335 417h1V421h-1zM364 410h1V421h-1zM366 412h1V421h-1zM368 413h1V421h-1zM370 414h1V421h-1zM372 415h1V421h-1zM374 416h1V421h-1zM376 418h1V421h-1zM378 419h1V421h-1zM407 419h1V421h-1zM414 419h1V421h-1zM428 418h1V421h-1zM430 419h1V421h-1zM432 420h1V421h-1zM434 420h1V421h-1zM441 420h1V421h-1zM443 420h1V421h-1zM470 416h1V421h-1zM472 417h1V421h-1zM474 417h1V421h-1zM484 414h1V421h-1zM488 414h1V421h-1zM491 416h1V421h-1zM493 416h1V421h-1zM495 416h1V421h-1zM499 417h1V421h-1zM501 418h1V421h-1zM503 418h1V421h-1zM532 416h1V421h-1zM534 417h1V421h-1zM542 415h1V421h-1zM545 416h1V421h-1zM547 418h1V421h-1zM553 417h1V421h-1zM555 417h1V421h-1zM557 418h1V421h-1zM559 419h1V421h-1zM561 419h1V421h-1zM605 418h1V421h-1zM607 418h1V421h-1zM636 420h1V421h-1zM638 420h1V421h-1zM680 412h1V421h-1zM682 412h1V421h-1zM686 411h1V421h-1zM690 411h1V421h-1zM692 412h1V421h-1zM694 413h1V421h-1zM696 414h1V421h-1zM698 415h1V421h-1zM700 416h1V421h-1zM702 417h1V421h-1zM705 417h1V421h-1zM707 418h1V421h-1zM715 416h1V421h-1zM719 418h1V421h-1zM721 419h1V421h-1zM725 419h1V421h-1zM773 418h1V421h-1zM777 418h1V421h-1zM781 417h1V421h-1zM783 419h1V421h-1zM786 420h1V421h-1zM808 415h1V421h-1zM810 417h1V421h-1zM813 417h1V421h-1zM817 419h1V421h-1zM856 414h1V421h-1zM858 414h1V421h-1zM860 416h1V421h-1zM862 417h1V421h-1zM864 419h1V421h-1zM881 403h1V421h-1zM894 391h1V421h-1zM896 394h1V421h-1zM898 398h1V421h-1zM900 401h1V421h-1zM902 402h1V421h-1zM904 403h1V421h-1zM906 407h1V421h-1zM908 412h1V421h-1zM910 417h1V421h-1zM912 419h1V421h-1zM914 420h1V421h-1zM979 404h1V421h-1zM981 408h1V421h-1zM983 409h1V421h-1zM985 410h1V421h-1zM987 411h1V421h-1zM989 412h1V421h-1zM991 415h1V421h-1zM993 418h1V421h-1zM1014 387h1V421h-1zM1016 392h1V421h-1zM1018 396h1V421h-1zM1020 402h1V421h-1zM1022 404h1V421h-1zM1024 408h1V421h-1zM1026 413h1V421h-1zM1137 410h1V421h-1zM1139 412h1V421h-1zM1141 415h1V421h-1zM1161 408h1V421h-1zM1164 410h1V421h-1zM1166 412h1V421h-1zM1168 412h1V421h-1zM1170 413h1V421h-1zM1191 405h1V421h-1z"/>
<path fill="#ff5252" d="M92 420h1V423h-1zM94 420h1V424h-1zM96 420h1V425h-1zM98 420h1V425h-1zM100 420h1V426h-1zM102 420h1V428h-1zM104 420h1V429h-1zM106 420h1V429h-1zM108 420h1V430h-1zM110 420h1V430h-1zM152 420h1V422h-1zM154 420h1V424h-1zM160 420h1V424h-1zM162 420h1V424h-1zM164 420h1V424h-1zM237 420h1V424h-1zM239 420h1V425h-1zM241 420h1V426h-1zM243 420h1V428h-1zM245 420h1V428h-1zM248 420h1V429h-1zM256 420h1V425h-1zM258 420h1V427h-1zM260 420h1V427h-1zM262 420h1V428h-1zM264 420h1V428h-1zM266 420h1V428h-1zM268 420h1V429h-1zM275 420h1V430h-1zM277 420h1V431h-1zM285 420h1V430h-1zM287 420h1V431h-1zM297 420h1V428h-1zM304 420h1V429h-1zM306 420h1V431h-1zM337 420h1V422h-1zM339 420h1V425h-1zM347 420h1V422h-1zM380 420h1V422h-1zM383 420h1V424h-1zM387 420h1V424h-1zM389 420h1V426h-1zM391 420h1V426h-1zM393 420h1V426h-1zM416 420h1V421h-1zM418 420h1V422h-1zM445 420h1V421h-1zM449 420h1V423h-1zM451 420h1V424h-1zM455 420h1V424h-1zM505 420h1V425h-1zM507 420h1V426h-1zM509 420h1V427h-1zM511 420h1V429h-1zM563 420h1V422h-1zM565 420h1V424h-1zM567 420h1V425h-1zM569 420h1V427h-1zM572 420h1V429h-1zM574 420h1V431h-1zM586 420h1V425h-1zM609 420h1V421h-1zM611 420h1V423h-1zM613 420h1V424h-1zM615 420h1V425h-1zM617 420h1V426h-1zM619 420h1V426h-1zM640 420h1V421h-1zM642 420h1V421h-1zM644 420h1V422h-1zM646 420h1V423h-1zM648 420h1V428h-1zM651 420h1V429h-1zM727 420h1V421h-1zM729 420h1V424h-1zM732 420h1V426h-1zM734 420h1V427h-1zM748 420h1V426h-1zM750 420h1V427h-1zM752 420h1V427h-1zM754 420h1V430h-1zM756 420h1V432h-1zM788 420h1V421h-1zM790 420h1V423h-1zM792 420h1V424h-1zM819 420h1V421h-1zM821 420h1V423h-1zM825 420h1V423h-1zM827 420h1V424h-1zM829 420h1V425h-1zM867 420h1V421h-1zM869 420h1V422h-1zM871 420h1V423h-1zM873 420h1V424h-1zM916 420h1V421h-1zM918 420h1V422h-1zM921 420h1V423h-1zM923 420h1V425h-1zM925 420h1V427h-1zM927 420h1V429h-1zM929 420h1V431h-1zM931 420h1V434h-1zM933 420h1V438h-1zM935 420h1V440h-1zM937 420h1V441h-1zM939 420h1V441h-1zM941 420h1V443h-1zM945 420h1V443h-1zM948 420h1V444h-1zM995 420h1V421h-1zM997 420h1V423h-1zM1029 420h1V423h-1zM1031 420h1V432h-1zM1033 420h1V438h-1zM1035 420h1V440h-1zM1037 420h1V442h-1zM1039 420h1V444h-1zM1041 420h1V446h-1zM1043 420h1V446h-1zM1045 420h1V446h-1zM1053 420h1V435h-1zM1056 420h1V436h-1zM1070 420h1V421h-1zM1072 420h1V424h-1zM1074 420h1V426h-1zM1085 420h1V427h-1zM1087 420h1V437h-1zM1089 420h1V445h-1zM1091 420h1V446h-1zM1093 420h1V447h-1zM1103 420h1V439h-1zM1105 420h1V439h-1zM1110 420h1V441h-1zM1143 420h1V421h-1z"/>
<path fill="#ffcdd2" d="M113 420h1V429h-1zM115 420h1V429h-1zM117 420h1V428h-1zM119 420h1V428h-1zM121 420h1V426h-1zM123 420h1V423h-1zM156 420h1V423h-1zM158 420h1V423h-1zM167 420h1V422h-1zM169 420h1V421h-1zM171 420h1V421h-1zM250 420h1V426h-1zM252 420h1V424h-1zM254 420h1V423h-1zM270 420h1V428h-1zM272 420h1V427h-1zM279 420h1V430h-1zM281 420h1V429h-1zM283 420h1V429h-1zM289 420h1V430h-1zM291 420h1V429h-1zM293 420h1V428h-1zM295 420h1V427h-1zM299 420h1V427h-1zM302 420h1V427h-1zM308 420h1V431h-1zM310 420h1V429h-1zM312 420h1V426h-1zM314 420h1V424h-1zM316 420h1V421h-1zM341 420h1V421h-1zM343 420h1V421h-1zM345 420h1V421h-1zM385 420h1V423h-1zM395 420h1V425h-1zM397 420h1V425h-1zM399 420h1V425h-1zM401 420h1V424h-1zM403 420h1V423h-1zM420 420h1V421h-1zM447 420h1V421h-1zM453 420h1V423h-1zM457 420h1V421h-1zM513 420h1V427h-1zM515 420h1V424h-1zM518 420h1V423h-1zM520 420h1V422h-1zM576 420h1V429h-1zM578 420h1V427h-1zM580 420h1V426h-1zM582 420h1V425h-1zM584 420h1V424h-1zM588 420h1V424h-1zM590 420h1V423h-1zM592 420h1V421h-1zM621 420h1V425h-1zM624 420h1V425h-1zM626 420h1V424h-1zM628 420h1V423h-1zM630 420h1V422h-1zM632 420h1V421h-1zM653 420h1V428h-1zM655 420h1V426h-1zM657 420h1V423h-1zM659 420h1V422h-1zM736 420h1V426h-1zM738 420h1V426h-1zM740 420h1V426h-1zM742 420h1V426h-1zM744 420h1V426h-1zM746 420h1V426h-1zM759 420h1V431h-1zM761 420h1V429h-1zM763 420h1V427h-1zM765 420h1V424h-1zM767 420h1V422h-1zM794 420h1V423h-1zM796 420h1V423h-1zM798 420h1V422h-1zM800 420h1V421h-1zM823 420h1V423h-1zM831 420h1V424h-1zM833 420h1V424h-1zM835 420h1V422h-1zM837 420h1V421h-1zM875 420h1V423h-1zM943 420h1V442h-1zM950 420h1V442h-1zM952 420h1V441h-1zM954 420h1V438h-1zM956 420h1V436h-1zM958 420h1V434h-1zM960 420h1V430h-1zM962 420h1V427h-1zM964 420h1V424h-1zM999 420h1V422h-1zM1047 420h1V439h-1zM1049 420h1V434h-1zM1051 420h1V433h-1zM1058 420h1V433h-1zM1060 420h1V431h-1zM1062 420h1V427h-1zM1064 420h1V426h-1zM1066 420h1V424h-1zM1076 420h1V426h-1zM1078 420h1V424h-1zM1095 420h1V445h-1zM1097 420h1V440h-1zM1099 420h1V439h-1zM1101 420h1V438h-1zM1107 420h1V439h-1zM1112 420h1V439h-1zM1114 420h1V437h-1zM1116 420h1V434h-1zM1118 420h1V431h-1zM1120 420h1V426h-1zM1122 420h1V423h-1z"/>
<polyline fill="none" stroke="#2962ff" stroke-width="1.2" stroke-linejoin="round" points="63.9,426.8 66.3,420.5 68.6,415.0 71.0,413.1 73.4,413.4 74.9,412.3 76.5,413.4 78.9,411.5 82.0,411.4 85.9,410.6 88.3,412.6 91.4,415.8 95.3,420.5 98.5,422.1 101.2,426.0 104.0,432.3 107.1,435.1 109.5,437.0 111.8,440.4 115.0,442.5 118.4,445.6 121.3,446.4 123.6,444.8 126.0,440.9 129.1,436.2 132.3,430.7 135.4,424.4 138.6,418.9 140.9,415.3 143.3,413.7 145.6,414.2 148.0,417.3 150.3,420.5 153.5,424.4 157.4,424.7 161.3,425.7 165.3,427.2 168.4,427.1 171.5,426.3 175.5,426.0 179.4,424.1 183.3,422.8 185.7,420.5 188.0,418.6 192.0,418.4 195.1,417.3 199.0,416.2 203.0,413.4 206.9,411.1 210.0,410.6 214.0,409.5 215.5,404.0 217.1,391.4 219.5,378.9 221.0,371.0 223.1,366.0 225.0,365.2 226.8,362.8 228.9,362.8 231.2,363.9 233.3,366.6 235.2,372.6 238.3,378.9 241.5,382.8 244.6,385.9 247.7,389.9 250.1,388.3 252.5,385.9 254.8,387.0 257.2,391.4 260.0,395.1 263.1,399.1 266.3,401.4 269.4,405.3 272.6,407.7 274.9,411.6 277.3,415.2 280.4,417.1 283.6,418.7 285.9,424.2 288.3,425.8 291.4,429.7 294.6,431.3 297.7,433.3 300.8,436.0 304.0,440.7 307.1,446.2 309.5,447.0 313.4,445.7 315.8,443.1 318.1,438.3 320.5,435.7 322.8,434.4 324.7,433.6 326.8,435.2 329.1,432.8 331.5,431.0 333.8,430.2 335.4,431.0 337.0,435.7 339.0,439.1 340.9,437.2 344.1,437.2 347.2,438.3 350.3,436.3 353.5,432.1 355.8,431.0 358.2,427.3 360.5,420.3 362.9,416.3 366.0,415.6 369.2,414.0 372.3,412.4 374.7,412.7 377.8,415.6 381.0,418.7 382.5,421.1 385.7,421.8 388.0,424.2 390.4,427.3 392.8,429.7 395.1,430.5 397.5,430.2 399.8,431.7 402.2,432.4 403.8,431.3 406.1,428.1 409.3,426.6 411.6,425.8 414.8,427.8 417.9,429.2 421.0,428.9 424.2,426.9 427.3,425.3 430.5,425.5 433.6,426.6 436.0,426.9 439.1,426.1 442.2,426.9 445.4,427.7 447.7,428.1 450.1,431.3 452.5,432.8 454.8,433.3 457.2,432.1 460.0,430.5 463.1,428.1 466.3,426.6 468.6,424.2 471.8,423.4 474.9,423.4 477.3,421.1 480.4,417.9 483.6,414.0 486.7,411.2 489.1,409.6 492.2,409.6 495.3,410.4 497.7,409.3 500.8,409.3 503.2,410.5 504.8,415.6 507.1,419.5 509.5,422.6 511.8,425.0 515.0,425.3 518.1,423.9 521.3,421.5 524.4,418.4 526.8,414.0 529.1,411.6 532.3,411.2 535.4,410.1 538.6,407.7 541.7,405.8 544.8,405.5 548.0,406.1 550.3,404.9 553.5,403.5 556.6,403.0 559.8,403.5 562.1,404.2 564.5,406.4 566.8,409.3 569.2,412.4 571.5,416.3 573.9,421.8 577.0,425.0 580.2,425.8 584.1,425.0 586.5,426.2 589.6,426.2 592.8,425.0 595.1,422.6 598.3,421.1 601.4,420.3 603.8,418.7 606.1,417.9 608.5,418.7 610.8,421.8 614.0,424.2 616.3,427.3 618.7,430.5 621.8,432.1 625.0,432.1 628.9,432.1 631.2,430.5 633.6,428.9 636.7,428.9 639.9,429.4 643.0,431.3 646.2,433.3 648.5,438.3 650.9,442.6 654.0,443.1 657.2,441.0 660.0,439.1 663.1,436.3 666.3,432.8 669.4,428.9 672.6,425.8 675.7,423.1 678.1,419.0 680.4,416.3 683.6,414.0 685.9,411.2 688.3,407.4 690.6,404.9 693.0,403.5 696.9,403.3 700.8,403.5 704.8,403.0 707.9,403.5 710.3,401.4 712.6,398.6 715.0,398.3 716.9,396.4 718.9,398.3 721.3,399.4 724.4,398.6 726.8,399.9 729.1,403.0 731.5,406.9 733.8,409.0 737.0,409.7 740.1,411.6 743.3,414.0 746.4,415.9 749.6,418.7 751.9,421.8 754.3,427.3 756.6,431.0 759.0,432.4 761.3,432.5 764.5,430.5 767.6,427.3 770.0,423.4 773.1,422.6 776.3,421.1 778.6,417.9 781.8,417.1 784.9,417.9 787.3,420.3 789.6,423.1 792.8,425.3 795.9,425.3 799.0,423.4 802.2,420.6 804.5,416.3 807.7,413.2 810.0,414.5 812.4,416.3 814.8,415.6 817.1,417.1 820.3,420.3 823.4,421.5 826.5,423.4 829.7,425.8 832.8,427.0 836.0,426.6 839.9,425.0 843.8,422.6 847.0,421.1 850.1,419.5 853.2,415.6 856.4,412.4 860.0,411.9 863.1,412.2 865.5,413.0 867.9,415.8 870.2,418.5 872.6,420.5 874.5,420.5 875.7,414.6 876.8,403.6 878.9,392.6 881.2,388.6 883.6,385.4 885.1,377.6 887.0,369.7 888.8,355.6 891.4,346.1 893.8,339.9 897.7,336.7 900.8,331.2 904.0,327.0 906.3,329.6 909.5,335.9 912.6,337.0 915.8,339.1 918.9,339.9 922.1,343.8 925.2,349.3 928.3,354.0 931.5,363.4 933.8,372.8 937.0,382.3 940.1,391.7 941.7,397.3 945.6,405.9 948.8,415.3 951.9,421.6 955.1,425.6 958.2,428.4 961.3,426.8 963.7,424.8 966.5,424.0 967.6,418.5 969.5,409.1 972.3,400.4 974.7,392.6 977.0,385.5 980.2,386.8 984.1,383.9 988.8,382.0 991.2,383.1 994.3,386.8 996.7,389.9 999.8,390.7 1002.2,387.1 1004.5,377.6 1007.7,357.1 1010.0,335.1 1013.2,321.0 1015.5,318.6 1017.9,316.3 1019.5,317.1 1021.8,315.5 1024.2,317.1 1027.3,321.0 1028.9,330.4 1031.2,341.4 1033.6,352.4 1036.7,365.0 1039.9,377.6 1043.0,388.6 1045.1,394.9 1048.5,389.9 1050.9,391.0 1054.0,398.1 1056.1,402.3 1060.0,401.4 1061.6,399.1 1063.9,399.9 1066.3,396.7 1068.6,395.1 1071.0,396.7 1073.4,401.4 1075.7,403.8 1078.1,403.8 1080.4,400.6 1083.1,396.4 1084.4,406.1 1085.9,420.3 1088.0,432.8 1089.9,441.2 1092.2,449.1 1094.6,455.8 1097.7,457.4 1100.1,461.6 1102.4,467.9 1104.8,473.4 1107.1,477.3 1109.5,484.4 1112.6,489.1 1115.0,491.5 1117.3,490.4 1119.7,488.8 1122.1,484.4 1124.4,478.1 1127.6,471.8 1129.9,466.3 1132.3,461.6 1135.4,459.3 1138.6,459.7 1140.9,462.4 1142.5,467.1 1144.8,467.9 1147.2,463.2 1150.3,455.3 1153.5,449.9 1155.8,443.6 1158.2,438.9 1161.3,436.5 1164.5,436.5 1167.6,434.9 1170.0,433.4 1172.3,430.2 1173.9,429.1 1176.3,420.3 1178.6,415.6 1181.8,408.5 1185.7,399.9 1188.8,395.9 1191.2,393.3"/>
<polyline fill="none" stroke="#ff6d00" stroke-width="1.2" stroke-linejoin="round" points="63.9,428.3 67.9,425.2 71.8,421.3 75.7,418.4 79.6,416.6 83.6,414.7 87.5,413.7 91.4,414.2 95.3,416.2 99.3,418.4 101.6,420.5 104.8,424.4 108.7,429.1 112.6,433.8 116.6,437.8 120.5,440.4 123.6,441.4 126.8,440.9 130.7,438.6 134.6,435.1 138.6,429.9 141.7,425.2 145.6,420.5 148.8,419.7 151.9,421.0 155.8,422.5 160.5,423.6 165.3,424.7 170.0,425.5 174.7,425.7 179.4,425.2 184.1,423.6 188.8,422.1 193.5,420.5 198.3,418.9 203.0,416.6 207.7,414.2 211.6,412.6 214.8,411.1 217.1,407.1 220.3,397.7 223.4,388.3 226.5,380.4 229.7,374.9 232.8,372.6 235.2,372.9 239.1,375.2 243.8,378.1 247.0,381.2 249.3,383.3 252.5,383.9 255.6,385.5 260.0,388.5 263.9,392.0 267.9,395.9 271.8,399.1 275.7,403.8 279.6,408.5 283.6,413.2 287.5,417.1 291.4,421.1 295.3,424.2 299.3,428.1 303.2,432.8 307.1,437.6 311.1,440.4 315.0,441.5 318.1,440.7 322.1,438.8 326.0,437.6 329.9,436.0 333.1,434.4 336.2,433.6 339.3,435.2 343.3,436.0 347.2,436.8 351.1,436.5 355.1,434.7 358.2,432.8 361.3,428.9 364.5,425.0 368.4,421.1 372.3,417.9 375.5,416.7 378.6,416.7 381.8,417.9 385.7,419.5 389.6,421.5 393.5,424.2 397.5,426.6 401.4,428.6 404.5,429.4 408.5,428.4 412.4,427.8 416.3,428.1 420.3,428.6 424.2,428.1 428.1,427.3 432.0,426.9 436.0,426.9 439.9,426.6 443.8,427.0 447.7,427.7 450.9,428.9 454.0,430.2 457.2,430.8 460.0,431.3 464.7,429.4 469.4,427.3 474.1,425.8 478.9,423.7 483.6,420.3 488.3,417.1 493.0,414.5 497.7,412.4 502.4,411.2 506.3,413.2 510.3,416.3 514.2,419.0 518.1,420.7 522.1,421.1 526.0,419.5 530.7,416.8 535.4,414.0 540.1,411.2 544.8,408.5 549.6,407.2 554.3,405.8 559.0,404.6 562.9,404.9 566.8,406.4 570.0,408.5 573.1,411.6 577.0,415.6 581.0,419.5 584.9,422.2 588.8,423.4 593.5,423.7 598.3,422.6 603.0,421.4 607.7,420.6 611.6,420.7 615.5,422.6 620.3,425.8 625.0,428.4 629.7,429.7 634.4,429.4 639.1,429.4 643.0,429.7 647.0,431.3 650.1,434.4 654.0,437.2 658.0,438.7 660.0,438.8 664.7,437.2 669.4,434.1 674.1,431.0 678.9,426.6 683.6,421.8 688.3,417.1 693.0,411.6 697.7,408.2 702.4,406.4 707.1,405.3 711.1,403.8 715.0,401.9 718.9,400.3 722.8,399.9 726.8,399.5 730.7,401.4 735.4,404.6 740.1,407.4 744.8,410.5 749.6,413.7 753.5,417.1 757.4,421.5 760.5,424.7 763.7,426.2 767.6,426.1 771.5,425.0 776.3,423.4 781.0,421.5 785.7,420.6 790.4,421.1 794.3,422.6 798.3,423.4 802.2,422.6 806.1,420.3 810.0,418.4 814.0,417.6 817.9,417.6 821.8,418.7 826.5,420.6 831.2,422.9 836.0,424.2 840.7,424.5 845.4,423.7 850.1,422.6 854.0,420.6 857.2,418.4 860.0,416.1 863.9,414.9 867.9,415.3 871.8,416.9 874.9,417.4 877.3,413.8 880.4,405.9 883.6,397.3 886.7,389.4 889.9,380.7 893.8,369.7 897.7,357.1 901.6,347.7 905.6,341.4 908.7,339.1 912.6,338.6 916.6,338.6 920.5,339.4 924.4,341.4 928.3,345.3 932.3,351.6 935.4,360.3 939.3,371.3 943.3,380.7 946.4,387.1 949.6,396.5 952.7,404.4 955.8,410.6 959.0,415.3 962.1,418.5 965.3,420.4 967.6,420.5 970.0,418.5 973.1,413.8 976.3,407.5 979.4,401.2 984.1,394.1 988.8,389.4 993.5,387.4 997.5,388.2 1001.4,387.9 1004.5,386.0 1007.7,379.1 1010.8,368.1 1014.0,354.0 1017.1,343.0 1020.3,335.1 1023.4,329.6 1026.5,327.0 1028.9,327.3 1031.2,331.2 1034.4,338.3 1037.5,347.7 1040.7,357.9 1043.8,368.1 1046.2,373.6 1049.3,378.3 1053.2,383.1 1056.4,388.6 1060.0,392.8 1063.1,394.4 1066.3,395.9 1069.4,396.2 1072.6,397.8 1075.7,399.5 1078.9,400.2 1082.0,399.5 1085.1,401.4 1087.5,406.9 1089.9,414.0 1092.2,422.4 1095.3,431.8 1099.3,441.2 1103.2,449.9 1107.1,457.7 1110.3,465.6 1113.4,472.6 1116.6,477.8 1119.7,481.3 1122.8,482.4 1126.0,480.5 1129.1,477.3 1133.1,472.6 1137.0,468.4 1140.1,466.3 1143.3,466.3 1146.4,466.3 1149.6,464.0 1153.5,459.3 1156.6,454.6 1159.8,449.9 1163.7,445.6 1168.4,441.2 1173.1,437.0 1177.0,431.8 1180.2,426.3 1184.1,420.3 1187.3,414.5 1191.2,408.2"/>
<path d="M64 30H1207" stroke="#089981" stroke-width="2" fill="none"/>
<path d="M64 39.5H1207" stroke="#f23645" stroke-width="1" stroke-dasharray="1 2" fill="none"/>
<path d="M64 44.5H1207M64 54.5H1207" stroke="#ff9800" stroke-width="1" fill="none"/>
<path fill="#089981" d="M65 49h1V50h-1zM67 49h1V50h-1zM73 49h1V50h-1zM81 49h1V51h-1zM90 50h1V51h-1zM92 50h1V51h-1zM108 51h1V52h-1zM113 52h1V54h-1zM117 52h1V53h-1zM119 52h1V53h-1zM125 51h1V53h-1zM127 51h1V53h-1zM131 51h1V52h-1zM133 51h1V52h-1zM135 50h1V51h-1zM140 50h1V51h-1zM142 50h1V51h-1zM144 50h1V51h-1zM154 51h1V53h-1zM156 52h1V53h-1zM160 51h1V52h-1zM164 51h1V53h-1zM167 52h1V53h-1zM169 50h1V52h-1zM183 51h1V52h-1zM185 50h1V52h-1zM187 51h1V52h-1zM189 50h1V52h-1zM191 51h1V53h-1zM194 51h1V52h-1zM200 51h1V52h-1zM206 50h1V51h-1zM212 50h1V51h-1zM214 50h1V51h-1zM216 49h1V51h-1zM218 45h1V50h-1zM221 44h1V46h-1zM223 45h1V46h-1zM225 44h1V46h-1zM231 46h1V47h-1zM233 46h1V48h-1zM239 47h1V48h-1zM243 47h1V48h-1zM245 47h1V48h-1zM248 47h1V48h-1zM252 46h1V48h-1zM254 45h1V47h-1zM279 48h1V49h-1zM281 48h1V49h-1zM285 48h1V50h-1zM287 49h1V50h-1zM289 49h1V50h-1zM299 49h1V50h-1zM306 50h1V51h-1zM308 50h1V51h-1zM310 50h1V51h-1zM324 48h1V50h-1zM326 49h1V50h-1zM331 49h1V51h-1zM333 49h1V50h-1zM341 51h1V53h-1zM345 50h1V51h-1zM347 50h1V51h-1zM349 50h1V51h-1zM351 50h1V51h-1zM353 50h1V51h-1zM362 48h1V50h-1zM364 48h1V50h-1zM366 48h1V50h-1zM368 48h1V50h-1zM376 48h1V50h-1zM378 49h1V50h-1zM383 50h1V51h-1zM385 50h1V52h-1zM387 50h1V51h-1zM389 50h1V51h-1zM391 50h1V51h-1zM393 50h1V51h-1zM395 50h1V51h-1zM405 50h1V51h-1zM407 50h1V51h-1zM410 50h1V51h-1zM412 50h1V51h-1zM414 49h1V51h-1zM424 50h1V51h-1zM426 50h1V51h-1zM430 49h1V51h-1zM451 51h1V52h-1zM453 51h1V52h-1zM457 51h1V52h-1zM461 51h1V52h-1zM476 50h1V51h-1zM478 50h1V51h-1zM480 50h1V51h-1zM482 50h1V51h-1zM488 49h1V51h-1zM491 50h1V51h-1zM493 50h1V51h-1zM499 50h1V51h-1zM501 49h1V51h-1zM503 49h1V51h-1zM515 51h1V52h-1zM518 50h1V52h-1zM520 50h1V51h-1zM522 50h1V51h-1zM524 49h1V51h-1zM530 48h1V50h-1zM532 49h1V50h-1zM534 50h1V51h-1zM545 49h1V50h-1zM547 49h1V50h-1zM551 49h1V50h-1zM553 49h1V50h-1zM555 49h1V51h-1zM557 48h1V50h-1zM569 50h1V51h-1zM576 50h1V51h-1zM578 50h1V51h-1zM580 50h1V51h-1zM582 50h1V51h-1zM584 50h1V51h-1zM586 50h1V51h-1zM588 50h1V51h-1zM590 50h1V51h-1zM592 49h1V51h-1zM594 50h1V51h-1zM599 50h1V51h-1zM605 49h1V50h-1zM611 49h1V51h-1zM613 49h1V51h-1zM615 50h1V51h-1zM619 50h1V51h-1zM621 50h1V52h-1zM624 50h1V52h-1zM626 51h1V52h-1zM628 51h1V52h-1zM632 50h1V51h-1zM634 49h1V51h-1zM667 51h1V52h-1zM669 51h1V52h-1zM671 50h1V52h-1zM684 50h1V51h-1zM694 49h1V51h-1zM698 50h1V51h-1zM700 49h1V51h-1zM705 49h1V51h-1zM707 49h1V50h-1zM709 49h1V50h-1zM717 48h1V50h-1zM719 49h1V50h-1zM721 48h1V50h-1zM723 49h1V50h-1zM734 49h1V50h-1zM736 49h1V50h-1zM740 49h1V50h-1zM742 49h1V50h-1zM744 50h1V51h-1zM746 49h1V51h-1zM748 49h1V51h-1zM750 49h1V51h-1zM752 50h1V51h-1zM754 49h1V51h-1zM756 51h1V52h-1zM761 51h1V52h-1zM773 49h1V51h-1zM775 49h1V51h-1zM777 49h1V51h-1zM779 49h1V50h-1zM781 49h1V50h-1zM783 49h1V50h-1zM786 50h1V51h-1zM788 49h1V51h-1zM790 50h1V52h-1zM792 50h1V51h-1zM794 50h1V51h-1zM802 49h1V51h-1zM804 49h1V51h-1zM806 49h1V50h-1zM808 49h1V50h-1zM815 49h1V50h-1zM819 49h1V50h-1zM821 49h1V51h-1zM829 50h1V51h-1zM831 50h1V51h-1zM837 49h1V51h-1zM840 50h1V51h-1zM842 50h1V52h-1zM844 49h1V51h-1zM848 50h1V51h-1zM850 50h1V51h-1zM852 50h1V51h-1zM856 49h1V51h-1zM858 49h1V50h-1zM862 49h1V51h-1zM864 49h1V51h-1zM877 48h1V51h-1zM879 45h1V49h-1zM881 45h1V46h-1zM883 46h1V48h-1zM887 44h1V46h-1zM889 43h1V45h-1zM891 42h1V44h-1zM894 42h1V43h-1zM898 42h1V44h-1zM900 42h1V43h-1zM902 41h1V43h-1zM904 41h1V42h-1zM910 42h1V44h-1zM912 42h1V43h-1zM914 40h1V42h-1zM916 40h1V42h-1zM927 40h1V42h-1zM929 41h1V42h-1zM941 42h1V44h-1zM948 43h1V45h-1zM950 44h1V45h-1zM952 44h1V45h-1zM954 43h1V45h-1zM956 44h1V45h-1zM958 44h1V45h-1zM960 44h1V45h-1zM962 43h1V45h-1zM964 43h1V44h-1zM968 42h1V44h-1zM970 40h1V43h-1zM972 40h1V41h-1zM975 40h1V41h-1zM979 39h1V41h-1zM985 40h1V41h-1zM987 40h1V41h-1zM991 40h1V41h-1zM993 39h1V41h-1zM997 40h1V41h-1zM999 40h1V41h-1zM1002 39h1V41h-1zM1004 39h1V41h-1zM1006 37h1V40h-1zM1008 35h1V38h-1zM1010 32h1V36h-1zM1018 33h1V34h-1zM1024 33h1V34h-1zM1037 35h1V36h-1zM1047 35h1V37h-1zM1049 35h1V36h-1zM1056 35h1V37h-1zM1058 36h1V37h-1zM1060 35h1V37h-1zM1066 35h1V36h-1zM1068 34h1V36h-1zM1080 34h1V36h-1zM1083 33h1V35h-1zM1091 39h1V40h-1zM1095 39h1V40h-1zM1097 38h1V40h-1zM1099 38h1V39h-1zM1116 41h1V43h-1zM1118 42h1V43h-1zM1122 40h1V42h-1zM1124 41h1V42h-1zM1126 41h1V43h-1zM1128 41h1V42h-1zM1130 41h1V42h-1zM1132 41h1V42h-1zM1145 43h1V44h-1zM1147 42h1V44h-1zM1149 41h1V43h-1zM1151 41h1V42h-1zM1159 41h1V42h-1zM1161 40h1V42h-1zM1166 41h1V42h-1zM1168 41h1V43h-1zM1180 39h1V41h-1zM1184 39h1V41h-1zM1186 39h1V41h-1zM1191 40h1V41h-1z"/>
<path fill="#f23645" d="M69 49h1V50h-1zM71 49h1V50h-1zM75 50h1V51h-1zM77 49h1V51h-1zM79 49h1V51h-1zM83 49h1V50h-1zM86 49h1V50h-1zM88 50h1V51h-1zM94 50h1V52h-1zM96 50h1V51h-1zM98 49h1V51h-1zM100 50h1V52h-1zM102 51h1V53h-1zM104 50h1V52h-1zM106 50h1V52h-1zM110 51h1V52h-1zM115 51h1V53h-1zM121 52h1V53h-1zM123 52h1V53h-1zM129 51h1V53h-1zM137 50h1V51h-1zM146 50h1V52h-1zM148 50h1V52h-1zM150 51h1V53h-1zM152 52h1V53h-1zM158 52h1V53h-1zM162 51h1V53h-1zM171 52h1V53h-1zM173 51h1V52h-1zM175 51h1V52h-1zM177 51h1V52h-1zM179 51h1V52h-1zM181 51h1V52h-1zM196 51h1V52h-1zM198 51h1V53h-1zM202 51h1V52h-1zM204 51h1V52h-1zM208 50h1V51h-1zM210 50h1V51h-1zM227 45h1V46h-1zM229 45h1V47h-1zM235 47h1V49h-1zM237 47h1V48h-1zM241 47h1V48h-1zM250 46h1V48h-1zM256 45h1V47h-1zM258 46h1V47h-1zM260 46h1V48h-1zM262 47h1V48h-1zM264 47h1V48h-1zM266 47h1V48h-1zM268 47h1V48h-1zM270 48h1V49h-1zM272 47h1V49h-1zM275 48h1V49h-1zM277 48h1V49h-1zM283 48h1V49h-1zM291 48h1V50h-1zM293 49h1V51h-1zM295 49h1V50h-1zM297 49h1V50h-1zM302 49h1V50h-1zM304 50h1V51h-1zM312 50h1V51h-1zM314 49h1V51h-1zM316 49h1V50h-1zM318 49h1V50h-1zM320 49h1V50h-1zM322 49h1V50h-1zM329 49h1V51h-1zM335 49h1V50h-1zM337 49h1V51h-1zM339 50h1V52h-1zM343 50h1V52h-1zM356 50h1V51h-1zM358 49h1V50h-1zM360 49h1V50h-1zM370 49h1V50h-1zM372 49h1V50h-1zM374 49h1V50h-1zM380 49h1V51h-1zM397 50h1V52h-1zM399 51h1V52h-1zM401 50h1V51h-1zM403 51h1V52h-1zM416 49h1V51h-1zM418 50h1V51h-1zM420 50h1V51h-1zM422 50h1V51h-1zM428 50h1V51h-1zM432 50h1V51h-1zM434 50h1V51h-1zM437 50h1V51h-1zM439 51h1V53h-1zM441 50h1V52h-1zM443 50h1V52h-1zM445 51h1V52h-1zM447 51h1V52h-1zM449 51h1V52h-1zM455 51h1V52h-1zM459 51h1V52h-1zM464 51h1V52h-1zM466 51h1V52h-1zM468 51h1V52h-1zM470 51h1V52h-1zM472 50h1V51h-1zM474 50h1V52h-1zM484 49h1V51h-1zM486 50h1V51h-1zM495 50h1V51h-1zM497 49h1V51h-1zM505 49h1V52h-1zM507 50h1V52h-1zM509 51h1V52h-1zM511 50h1V52h-1zM513 51h1V52h-1zM526 49h1V51h-1zM528 49h1V50h-1zM536 49h1V51h-1zM538 49h1V51h-1zM540 49h1V50h-1zM542 49h1V50h-1zM549 49h1V50h-1zM559 49h1V50h-1zM561 49h1V50h-1zM563 49h1V50h-1zM565 49h1V51h-1zM567 49h1V50h-1zM572 50h1V51h-1zM574 50h1V51h-1zM597 49h1V51h-1zM601 49h1V51h-1zM603 49h1V50h-1zM607 49h1V50h-1zM609 49h1V50h-1zM617 50h1V51h-1zM630 50h1V52h-1zM636 50h1V51h-1zM638 51h1V52h-1zM640 50h1V52h-1zM642 50h1V52h-1zM644 51h1V52h-1zM646 50h1V52h-1zM648 51h1V53h-1zM651 51h1V53h-1zM653 52h1V53h-1zM655 52h1V53h-1zM657 51h1V53h-1zM659 51h1V53h-1zM661 51h1V52h-1zM663 51h1V53h-1zM665 51h1V53h-1zM673 51h1V52h-1zM675 50h1V52h-1zM678 50h1V51h-1zM680 50h1V51h-1zM682 50h1V51h-1zM686 50h1V51h-1zM688 50h1V51h-1zM690 49h1V51h-1zM692 50h1V51h-1zM696 50h1V51h-1zM702 49h1V51h-1zM711 48h1V50h-1zM713 49h1V50h-1zM715 48h1V50h-1zM725 49h1V51h-1zM727 49h1V50h-1zM729 48h1V50h-1zM732 49h1V50h-1zM738 49h1V51h-1zM759 51h1V52h-1zM763 50h1V52h-1zM765 50h1V51h-1zM767 49h1V51h-1zM769 49h1V51h-1zM771 49h1V50h-1zM796 50h1V51h-1zM798 50h1V52h-1zM800 50h1V51h-1zM810 49h1V50h-1zM813 49h1V50h-1zM817 49h1V50h-1zM823 49h1V51h-1zM825 50h1V51h-1zM827 50h1V51h-1zM833 50h1V52h-1zM835 50h1V51h-1zM846 50h1V51h-1zM854 50h1V51h-1zM860 49h1V50h-1zM867 50h1V51h-1zM869 49h1V51h-1zM871 50h1V51h-1zM873 50h1V51h-1zM875 50h1V51h-1zM885 45h1V47h-1zM896 42h1V44h-1zM906 41h1V42h-1zM908 41h1V43h-1zM918 40h1V41h-1zM921 40h1V41h-1zM923 40h1V42h-1zM925 40h1V42h-1zM931 41h1V42h-1zM933 41h1V43h-1zM935 42h1V43h-1zM937 42h1V44h-1zM939 42h1V44h-1zM943 42h1V44h-1zM945 44h1V45h-1zM966 42h1V44h-1zM977 40h1V42h-1zM981 40h1V41h-1zM983 40h1V41h-1zM989 40h1V41h-1zM995 40h1V42h-1zM1012 32h1V34h-1zM1014 32h1V34h-1zM1016 32h1V34h-1zM1020 33h1V34h-1zM1022 33h1V34h-1zM1026 33h1V34h-1zM1029 34h1V35h-1zM1031 34h1V36h-1zM1033 34h1V36h-1zM1035 34h1V36h-1zM1039 35h1V37h-1zM1041 35h1V37h-1zM1043 35h1V37h-1zM1045 35h1V37h-1zM1051 35h1V36h-1zM1053 35h1V36h-1zM1062 35h1V36h-1zM1064 35h1V36h-1zM1070 33h1V35h-1zM1072 34h1V35h-1zM1074 35h1V36h-1zM1076 35h1V36h-1zM1078 35h1V36h-1zM1085 33h1V36h-1zM1087 35h1V39h-1zM1089 38h1V40h-1zM1093 39h1V40h-1zM1101 38h1V40h-1zM1103 39h1V41h-1zM1105 40h1V42h-1zM1107 41h1V42h-1zM1110 41h1V43h-1zM1112 41h1V43h-1zM1114 42h1V43h-1zM1120 41h1V43h-1zM1134 41h1V42h-1zM1137 41h1V42h-1zM1139 41h1V42h-1zM1141 42h1V43h-1zM1143 42h1V44h-1zM1153 41h1V42h-1zM1155 41h1V42h-1zM1157 41h1V42h-1zM1164 41h1V42h-1zM1170 41h1V43h-1zM1172 41h1V42h-1zM1174 40h1V42h-1zM1176 39h1V41h-1zM1178 40h1V41h-1zM1182 40h1V42h-1zM1188 39h1V41h-1z"/>
<g stroke="#e0e3eb" stroke-width="1" fill="none">
<rect x="10" y="27" width="1259" height="511" stroke-width="1.3"/>
<path d="M10 57.5H1269M10 293.5H1269"/>
</g>
<text y="45.6" fill="#131722" stroke="#131722" stroke-width="0.15"><tspan x="72" textLength="85.3" lengthAdjust="spacingAndGlyphs">XRP / TetherUS,</tspan> <tspan x="163.3" textLength="14.5" lengthAdjust="spacingAndGlyphs">30,</tspan> <tspan x="183.2" textLength="45.0" lengthAdjust="spacingAndGlyphs">BINANCE</tspan> <tspan x="236.4" textLength="7.4" lengthAdjust="spacingAndGlyphs">O</tspan> <tspan x="244.6" textLength="34.5" lengthAdjust="spacingAndGlyphs" fill="#f23645" stroke="#f23645">0.6326</tspan> <tspan x="287.6" textLength="7.0" lengthAdjust="spacingAndGlyphs">H</tspan> <tspan x="295.4" textLength="34.6" lengthAdjust="spacingAndGlyphs" fill="#f23645" stroke="#f23645">0.6330</tspan> <tspan x="338.5" textLength="6.0" lengthAdjust="spacingAndGlyphs">L</tspan> <tspan x="345.2" textLength="34.5" lengthAdjust="spacingAndGlyphs" fill="#f23645" stroke="#f23645">0.6317</tspan> <tspan x="387.6" textLength="6.4" lengthAdjust="spacingAndGlyphs">C</tspan> <tspan x="394.8" textLength="34.7" lengthAdjust="spacingAndGlyphs" fill="#f23645" stroke="#f23645">0.6322</tspan> <tspan x="438.2" textLength="40.7" lengthAdjust="spacingAndGlyphs" fill="#f23645" stroke="#f23645">−0.0003</tspan> <tspan x="484.7" textLength="43.4" lengthAdjust="spacingAndGlyphs" fill="#f23645" stroke="#f23645">(−0.05%)</tspan></text>
<text y="76.9" fill="#131722" stroke="#131722" stroke-width="0.15"><tspan x="72.9" textLength="14.2" lengthAdjust="spacingAndGlyphs">RSI</tspan> <tspan x="93" textLength="18.3" lengthAdjust="spacingAndGlyphs">(14,</tspan> <tspan x="116.8" textLength="30.5" lengthAdjust="spacingAndGlyphs">close)</tspan> <tspan x="156" textLength="28.8" lengthAdjust="spacingAndGlyphs" fill="#7e57c2" stroke="#7e57c2">64.22</tspan> <tspan x="192.7" textLength="29.5" lengthAdjust="spacingAndGlyphs" fill="#ffe636" stroke="#ffe636">55.50</tspan></text>
<text transform="translate(233.2 77.30000000000001) scale(0.78 1.0)" text-anchor="middle" fill="#131722" stroke="#131722" stroke-width="0.2" font-family="'DejaVu Sans', 'Liberation Sans', Arial, sans-serif" font-size="11.5">∅</text>
<text transform="translate(249.4 77.30000000000001) scale(0.78 1.0)" text-anchor="middle" fill="#131722" stroke="#131722" stroke-width="0.2" font-family="'DejaVu Sans', 'Liberation Sans', Arial, sans-serif" font-size="11.5">∅</text>
<text transform="translate(264.4 77.30000000000001) scale(0.78 1.0)" text-anchor="middle" fill="#131722" stroke="#131722" stroke-width="0.2" font-family="'DejaVu Sans', 'Liberation Sans', Arial, sans-serif" font-size="11.5">∅</text>
<text transform="translate(279.3 77.30000000000001) scale(0.78 1.0)" text-anchor="middle" fill="#131722" stroke="#131722" stroke-width="0.2" font-family="'DejaVu Sans', 'Liberation Sans', Arial, sans-serif" font-size="11.5">∅</text>
<text y="312.9" fill="#131722" stroke="#131722" stroke-width="0.15"><tspan x="72.1" textLength="29.5" lengthAdjust="spacingAndGlyphs">MACD</tspan> <tspan x="106.9" textLength="19.1" lengthAdjust="spacingAndGlyphs">(12,</tspan> <tspan x="131.6" textLength="15.2" lengthAdjust="spacingAndGlyphs">26,</tspan> <tspan x="151.4" textLength="30.8" lengthAdjust="spacingAndGlyphs">close)</tspan> <tspan x="190.3" textLength="35.3" lengthAdjust="spacingAndGlyphs" fill="#b2dfdb" stroke="#b2dfdb">0.0013</tspan> <tspan x="233.8" textLength="35.0" lengthAdjust="spacingAndGlyphs" fill="#2962ff" stroke="#2962ff">0.0023</tspan> <tspan x="276.8" textLength="35.2" lengthAdjust="spacingAndGlyphs" fill="#ff6d00" stroke="#ff6d00">0.0010</tspan></text>
<g fill="#131722">
<text y="79.05" stroke="#131722" stroke-width="0.05"><tspan x="1216.1" textLength="29.4" lengthAdjust="spacingAndGlyphs">90.00</tspan></text>
<text y="110.05" stroke="#131722" stroke-width="0.05"><tspan x="1216.1" textLength="29.4" lengthAdjust="spacingAndGlyphs">80.00</tspan></text>
<text y="140.9" stroke="#131722" stroke-width="0.05"><tspan x="1216.1" textLength="29.4" lengthAdjust="spacingAndGlyphs">70.00</tspan></text>
<text y="171.8" stroke="#131722" stroke-width="0.05"><tspan x="1216.1" textLength="29.4" lengthAdjust="spacingAndGlyphs">60.00</tspan></text>
<text y="204.05" stroke="#131722" stroke-width="0.05"><tspan x="1216.1" textLength="29.4" lengthAdjust="spacingAndGlyphs">50.00</tspan></text>
<text y="234.8" stroke="#131722" stroke-width="0.05"><tspan x="1216.1" textLength="29.4" lengthAdjust="spacingAndGlyphs">40.00</tspan></text>
<text y="265.6" stroke="#131722" stroke-width="0.05"><tspan x="1216.1" textLength="29.4" lengthAdjust="spacingAndGlyphs">30.00</tspan></text>
<text y="308.6" stroke="#131722" stroke-width="0.05"><tspan x="1216.2" textLength="35.3" lengthAdjust="spacingAndGlyphs">0.0100</tspan></text>
<text y="366.8" stroke="#131722" stroke-width="0.05"><tspan x="1216.2" textLength="35.3" lengthAdjust="spacingAndGlyphs">0.0050</tspan></text>
<text y="423.9" stroke="#131722" stroke-width="0.05"><tspan x="1216.2" textLength="35.3" lengthAdjust="spacingAndGlyphs">0.0000</tspan></text>
<text y="481.9" stroke="#131722" stroke-width="0.05"><tspan x="1216.6" textLength="40.9" lengthAdjust="spacingAndGlyphs">−0.0050</tspan></text>
<text y="528.1"><tspan x="142.0" textLength="12.2" lengthAdjust="spacingAndGlyphs">21</tspan></text>
<text y="528.1"><tspan x="242.0" textLength="12.2" lengthAdjust="spacingAndGlyphs">22</tspan></text>
<text y="528.1"><tspan x="341.0" textLength="12.2" lengthAdjust="spacingAndGlyphs">23</tspan></text>
<text y="528.1"><tspan x="441.0" textLength="12.2" lengthAdjust="spacingAndGlyphs">24</tspan></text>
<text y="528.1"><tspan x="541.0" textLength="12.2" lengthAdjust="spacingAndGlyphs">25</tspan></text>
<text y="528.1"><tspan x="640.0" textLength="12.2" lengthAdjust="spacingAndGlyphs">26</tspan></text>
<text y="528.1"><tspan x="740.0" textLength="12.2" lengthAdjust="spacingAndGlyphs">27</tspan></text>
<text y="528.1"><tspan x="840.0" textLength="12.2" lengthAdjust="spacingAndGlyphs">28</tspan></text>
<text y="528.1"><tspan x="940.0" textLength="12.2" lengthAdjust="spacingAndGlyphs">29</tspan></text>
<text y="528.1"><tspan x="1039.0" textLength="12.2" lengthAdjust="spacingAndGlyphs">30</tspan></text>
<text y="528.1"><tspan x="1135.3" textLength="18.9" lengthAdjust="spacingAndGlyphs">Oct</tspan></text>
</g>
<circle cx="37.5" cy="524.4" r="9.5" fill="#f0f2f6"/>
<text y="528.5" fill="#434651" stroke="#434651" stroke-width="0.15" font-size="11"><tspan x="34.8" textLength="5.4" lengthAdjust="spacingAndGlyphs">Z</tspan></text>
<circle cx="1238.6" cy="524.4" r="9.5" fill="#f0f2f6"/>
<text y="528.5" fill="#434651" stroke="#434651" stroke-width="0.15" font-size="11"><tspan x="1235.3" textLength="6.6" lengthAdjust="spacingAndGlyphs">A</tspan></text>
<rect x="14.3" y="31" width="45.7" height="25.6" rx="3.5" fill="#fff" stroke="#e0e3eb" stroke-width="1.2"/>
<text y="48.6" fill="#131722" stroke="#131722" stroke-width="0.15"><tspan x="23.2" textLength="27.2" lengthAdjust="spacingAndGlyphs">USDT</tspan></text>
<g transform="translate(1191.5 44.4)"><circle r="11.6" fill="#fff"/><circle r="9.7" fill="#fff" stroke="#9c27b0" stroke-width="1.6"/><path d="M1.75 -5.2L3.5 -5.2L0.5 -0.45L4.45 -0.45L4.25 0.35L-2.5 5.5L-3.6 5.5L-0.45 0.65L-4.4 0.65L-4.5 0z" fill="#9c27b0"/></g>
<g fill="#131722"><path d="M10 550.2h8v9.4h-4.1v-5.8H10z"/><circle cx="21.1" cy="552.1" r="1.95"/><path d="M24.7 550.2h5l-4.1 9.4h-4.6z"/></g>
<text y="559.6" fill="#131722" stroke="#131722" stroke-width="0.15" font-size="13"><tspan x="32.8" textLength="70.5" lengthAdjust="spacingAndGlyphs">TradingView</tspan></text>
</svg>
</body></html>
